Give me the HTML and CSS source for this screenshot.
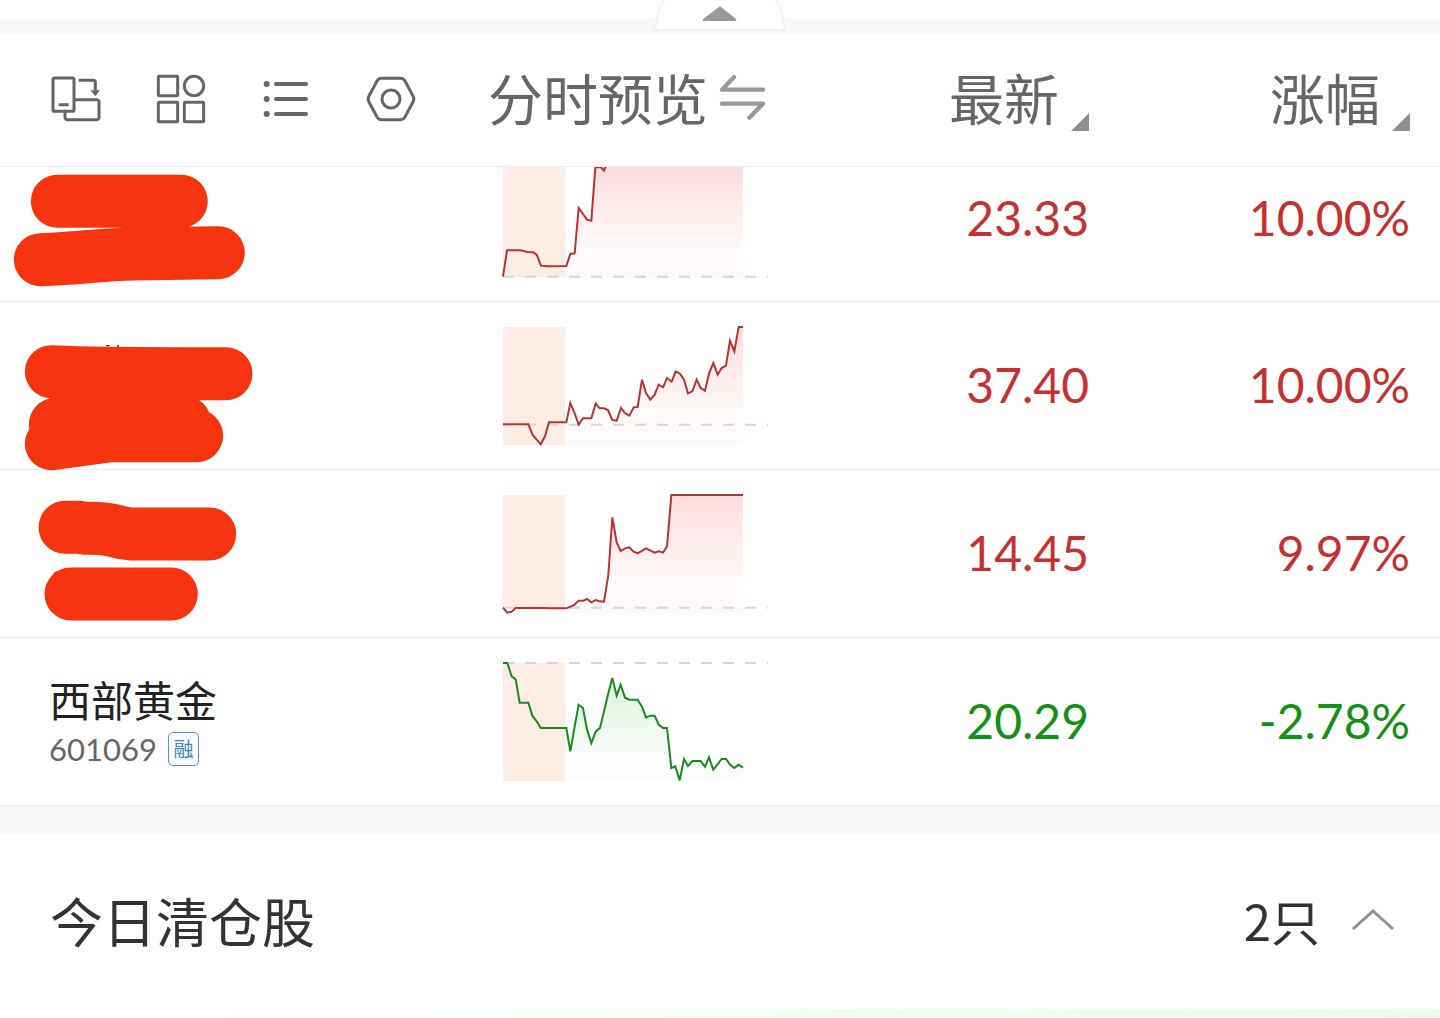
FILE: index.html
```html
<!DOCTYPE html>
<html lang="zh-CN">
<head>
<meta charset="utf-8">
<meta name="viewport" content="width=device-width, initial-scale=1">
<title>持仓</title>
<link rel="stylesheet" href="styles.css">
</head>
<body>
<div class="divider divider-top">
  <button class="pull-tab" aria-label="收起">
    <svg viewBox="0 0 140 36" aria-hidden="true">
      <path class="tab-shape" d="M5 30L8 15Q10 4 17 -4H123Q130 4 132 15L135 30Z"/>
      <path class="tab-arrow" d="M69 7 Q70 6 71 7 L86 19 Q87 21 85 21 H54 Q52 21 53 19 Z"/>
    </svg>
  </button>
</div>

<main>
<table class="stocks">
  <colgroup><col class="col-name"><col class="col-chart"><col class="col-price"><col class="col-change"></colgroup>
  <thead>
    <tr>
      <th scope="col">
        <div class="tools">
          <button class="tool" aria-label="横屏"><svg viewBox="63 72 150 150" aria-hidden="true">
            <rect x="69" y="84" width="63" height="100" rx="5"/><path d="M86 164H116M134 149H200Q207 149 207 156V202Q207 209 200 209H112Q105 209 105 202V186M146 91H190Q196 91 196 97V124"/><path class="solid" d="M181 121H210L196 139Z"/></svg></button>
          <button class="tool" aria-label="宫格"><svg viewBox="378 72 150 150" aria-hidden="true">
            <rect x="385" y="79" width="58" height="58" rx="3"/><circle cx="492" cy="108" r="29"/><rect x="385" y="157" width="58" height="58" rx="3"/><rect x="463" y="157" width="58" height="58" rx="3"/></svg></button>
          <button class="tool" aria-label="列表"><svg viewBox="693 72 150 150" aria-hidden="true">
            <path class="bars" d="M738 102H828M738 147H828M738 192H828"/><g class="solid"><circle cx="710" cy="102" r="9"/><circle cx="710" cy="147" r="9"/><circle cx="710" cy="192" r="9"/></g></svg></button>
          <button class="tool" aria-label="设置"><svg viewBox="1008 72 150 150" aria-hidden="true">
            <path d="M1055 85H1111Q1120 85 1125 93L1149 138Q1154 147 1149 156L1125 201Q1120 209 1111 209H1055Q1046 209 1041 201L1017 156Q1012 147 1017 138L1041 93Q1046 85 1055 85Z"/><circle cx="1083" cy="147" r="27"/></svg></button>
        </div>
      </th>
      <th scope="col">
        <button class="head-button">分时预览<svg class="swap" viewBox="0 0 144 144" aria-hidden="true"><path d="M45 15L9 53H132M9 95H132L91 137"/></svg></button>
      </th>
      <th scope="col"><button class="head-button sort">最新<svg class="corner" viewBox="0 0 18 18" aria-hidden="true"><path d="M18 0V18H0Z"/></svg></button></th>
      <th scope="col"><button class="head-button sort">涨幅<svg class="corner" viewBox="0 0 18 18" aria-hidden="true"><path d="M18 0V18H0Z"/></svg></button></th>
    </tr>
  </thead>
  <tbody>
    <tr class="partial up">
      <td class="name"><svg class="mask" viewBox="0 6 810 402" role="img" aria-label="已隐藏"><path d="M172 109H544M121 284C250 280 300 268 400 267L655 263"/></svg></td>
      <td class="chart"><svg viewBox="39 21 795 333" aria-hidden="true">
        <defs>
          <linearGradient id="rise" x1="0" y1="0" x2="0" y2="1"><stop offset="0" stop-color="#fcdcdd"/><stop offset=".75" stop-color="#fffafa"/><stop offset="1" stop-color="#fffafa"/></linearGradient>
          <linearGradient id="fall" x1="0" y1="0" x2="0" y2="1"><stop offset="0" stop-color="#dcf1dd"/><stop offset=".75" stop-color="#fafdfa"/><stop offset="1" stop-color="#fafdfa"/></linearGradient>
          <clipPath id="below-head"><rect x="30" y="21" width="810" height="345"/></clipPath>
        </defs>
        <path fill="url(#rise)" d="M225 319L229 318L241 282L254 280L266 144L291 179L304 182L316 21H759V351H225Z"/>
        <rect class="auction" x="39" y="21" width="186" height="330"/>
        <path class="base" d="M39 350H834"/>
        <path class="line" clip-path="url(#below-head)" d="M39 350L51 271H92L112 276L129 277L140 284L153 317L175 319L229 318L241 282L254 280L266 144L291 179L304 182L316 22L333 21L342 32L348 16"/>
      </svg></td>
      <td class="price">23.33</td>
      <td class="change">10.00%</td>
    </tr>
    <tr class="up">
      <td class="name"><svg class="mask" viewBox="0 411 810 501" role="img" aria-label="已隐藏"><path d="M154 620L230 623Q380 626 678 626M166 778L554 772M154 836L330 812H590"/><path class="trace" d="M318 542H328M351 543H357"/></svg></td>
      <td class="chart"><svg viewBox="39 36 795 354" aria-hidden="true">
        <path fill="url(#rise)" d="M225 322H229L241 264L266 329L279 310H304L317 266L329 280H342L354 285L367 315L380 317L393 279L405 294L418 302L431 277L443 276L456 194L468 234L481 254L494 239L506 209L519 217L531 189L545 200L557 169L570 176L582 194L594 235L607 229L620 194L632 219L645 227L657 176L670 144L683 179L695 159L708 152L720 77L733 109L746 36H759V390H225Z"/>
        <rect class="auction" x="39" y="36" width="186" height="354"/>
        <path class="base" d="M39 329H834"/>
        <path class="line" d="M39 328H115L128 360L152 388L165 364L177 322H229L241 264L254 295L266 329L279 310H304L317 266L329 280H342L354 285L367 315L380 317L393 279L405 294L418 302L431 277L443 276L456 194L468 234L481 254L494 239L506 209L519 217L531 189L545 200L557 169L570 176L582 194L594 235L607 229L620 194L632 219L645 227L657 176L670 144L683 179L695 159L708 152L720 77L733 109L746 36H759"/>
      </svg></td>
      <td class="price">37.40</td>
      <td class="change">10.00%</td>
    </tr>
    <tr class="up">
      <td class="name"><svg class="mask" viewBox="0 -45 810 501" role="img" aria-label="已隐藏"><path d="M195 127H240L258 130Q310 128 350 139Q375 146 395 147H629M213 327H514"/><path class="nib" d="M158 268L166 260L200 248V300Z"/></svg></td>
      <td class="chart"><svg viewBox="39 30 795 354" aria-hidden="true">
        <path fill="url(#rise)" d="M225 370H229L253 360L266 347H280L292 342L304 352L317 345L329 349L342 350L355 270L367 97L380 172L392 198L405 190L418 187L430 199L443 205L468 190L494 203L506 199L519 203L531 184L544 30H759V384H225Z"/>
        <rect class="auction" x="39" y="30" width="186" height="340"/>
        <path class="base" d="M39 368H834"/>
        <path class="line" d="M39 368L52 383L65 380L77 369H165L175 370H229L253 360L266 347H280L292 342L304 352L317 345L329 349L342 350L355 270L367 97L380 172L392 198L405 190L418 187L430 199L443 205L468 190L494 203L506 199L519 203L531 184L544 30H759"/>
      </svg></td>
      <td class="price">14.45</td>
      <td class="change">9.97%</td>
    </tr>
    <tr class="down">
      <td class="name">
        <div class="stock-name">西部黄金</div>
        <div class="stock-code">601069<span class="badge">融</span></div>
      </td>
      <td class="chart"><svg viewBox="39 39 795 354" aria-hidden="true">
        <path fill="url(#fall)" d="M225 234H229L241 304L254 229L266 164L279 174L291 239L304 279L317 245L330 234L342 184L355 129L367 84L380 137L392 104L405 143L418 149H443L456 170L468 202L481 197H494L506 224L519 234H531L544 354L556 349L569 391L582 327L594 348L607 333H632L645 350L657 322L670 359L695 327H708L720 344L733 354L746 344L759 353V392H225Z"/>
        <rect class="auction" x="39" y="39" width="186" height="354"/>
        <path class="base" d="M39 39H834"/>
        <path class="line" d="M39 39H52L65 79L77 88L89 158H115L127 197L140 214L152 234H229L241 304L254 229L266 164L279 174L291 239L304 279L317 245L330 234L342 184L355 129L367 84L380 137L392 104L405 143L418 149H443L456 170L468 202L481 197H494L506 224L519 234H531L544 354L556 349L569 391L582 327L594 348L607 333H632L645 350L657 322L670 359L695 327H708L720 344L733 354L746 344L759 353"/>
      </svg></td>
      <td class="price">20.29</td>
      <td class="change">-2.78%</td>
    </tr>
  </tbody>
</table>

<div class="divider"></div>

<section class="cleared">
  <h2>今日清仓股</h2>
  <button class="toggle" aria-expanded="true">2只<svg viewBox="0 0 42 24" aria-hidden="true"><path d="M1 21L21 3L41 21"/></svg></button>
</section>
<div class="tint"></div>
</main>
</body>
</html>
```

FILE: styles.css
```css
* {
  box-sizing: border-box;
}

body {
  margin: 0;
  background: #fff;
  color: #333;
  font-family: "Noto Sans CJK SC", sans-serif;
}

button {
  padding: 0;
  border: 0;
  background: none;
  color: inherit;
  font: inherit;
  cursor: pointer;
}

svg {
  display: block;
  overflow: visible;
}

.divider {
  height: 28px;
  background: #f6f8fa;
}

.divider-top {
  position: relative;
  height: 33px;
  border-top: 19px solid #fff;
}

.pull-tab {
  position: absolute;
  top: -19px;
  left: 50%;
  width: 140px;
  margin-left: -70px;
}

.pull-tab svg {
  overflow: hidden;
}

.tab-shape {
  fill: #fff;
  stroke: #f2f3f4;
  stroke-width: 2;
}

.tab-arrow {
  fill: #999;
}

.stocks {
  width: 100%;
  table-layout: fixed;
  border-collapse: separate;
  border-spacing: 0;
}

.col-name {
  width: 488px;
}

.col-price {
  width: 270px;
}

.col-change {
  width: 351px;
}

th,
td {
  padding: 0;
  border-bottom: 1px solid #ececec;
  text-align: left;
  font-weight: 400;
}

th {
  height: 134px;
  padding-bottom: 2px;
  color: #666;
}

td {
  height: 168px;
}

.tools {
  display: flex;
  gap: 55px;
  padding-left: 51px;
}

.tool svg {
  width: 50px;
  height: 50px;
  fill: none;
  stroke: #666;
  stroke-width: 9;
}

.tool .bars {
  stroke-width: 12;
  stroke-linecap: round;
}

.tool .solid {
  fill: #666;
  stroke: none;
}

.head-button {
  display: flex;
  align-items: center;
  gap: 11px;
  padding-bottom: 6px;
  font-size: 55px;
  line-height: 62px;
  white-space: nowrap;
}

.swap {
  width: 48px;
  height: 48px;
  fill: none;
  stroke: #999;
  stroke-width: 13;
  stroke-linecap: round;
  stroke-linejoin: round;
}

.sort {
  align-items: flex-end;
  gap: 12px;
  padding-bottom: 0;
  margin-left: auto;
}

.sort::before {
  content: none;
}

.corner {
  width: 18px;
  height: 18px;
  margin-bottom: -4px;
  fill: #8e8e93;
}

th .sort {
  padding-bottom: 6px;
}

th:last-child,
.change {
  padding-right: 30px;
}

.chart {
  padding-left: 15px;
}

.chart svg {
  width: 265px;
}

.auction {
  fill: #feede4;
}

.base {
  fill: none;
  stroke: #d6d7da;
  stroke-width: 6;
  stroke-dasharray: 33 33;
}

.line {
  fill: none;
  stroke: #b83434;
  stroke-width: 6;
}

.down .line {
  stroke: #1b8a1b;
}

.price,
.change {
  padding-bottom: 2px;
  font-family: Lato, "Noto Sans CJK SC", sans-serif;
  font-size: 48px;
  line-height: 60px;
  text-align: right;
}

.up {
  color: #c33230;
}

.down {
  color: #149014;
}

.partial td {
  height: 135px;
  padding-bottom: 33px;
}

.partial .name,
.partial .chart {
  padding-bottom: 0;
  vertical-align: top;
}

.mask {
  width: 270px;
  fill: none;
  stroke: #f63510;
  stroke-width: 159;
  stroke-linecap: round;
  stroke-linejoin: round;
}

.mask .trace {
  stroke: #552222;
  stroke-width: 4;
  stroke-linecap: butt;
}

.mask .nib {
  fill: #f63510;
  stroke: none;
}

.stock-name {
  padding: 4px 0 0 49px;
  color: #222;
  font-size: 42px;
  line-height: 50px;
}

.stock-code {
  display: flex;
  align-items: center;
  gap: 11px;
  padding-left: 49px;
  color: #666;
  font-family: Lato, sans-serif;
  font-size: 31px;
  line-height: 50px;
}

.badge {
  width: 31px;
  height: 34px;
  border: 1px solid #5b92b5;
  border-radius: 5px;
  background: #f7fcff;
  color: #4682b4;
  font: 20px/31px "Noto Sans CJK SC", sans-serif;
  text-align: center;
}

.cleared {
  display: flex;
  align-items: center;
  justify-content: space-between;
  height: 175px;
  padding: 0 46px 3px 50px;
}

.cleared h2 {
  margin: 0;
  font-size: 53px;
  font-weight: 400;
  line-height: 64px;
}

.toggle {
  display: flex;
  align-items: center;
  gap: 32px;
  font-size: 49px;
  line-height: 64px;
}

.toggle svg {
  width: 42px;
  height: 24px;
  fill: none;
  stroke: #8e8e93;
  stroke-width: 3;
}

.tint {
  height: 9px;
  background: linear-gradient(to right, #fff 10%, #f3fcf3 60%, #edfbed);
}
```
